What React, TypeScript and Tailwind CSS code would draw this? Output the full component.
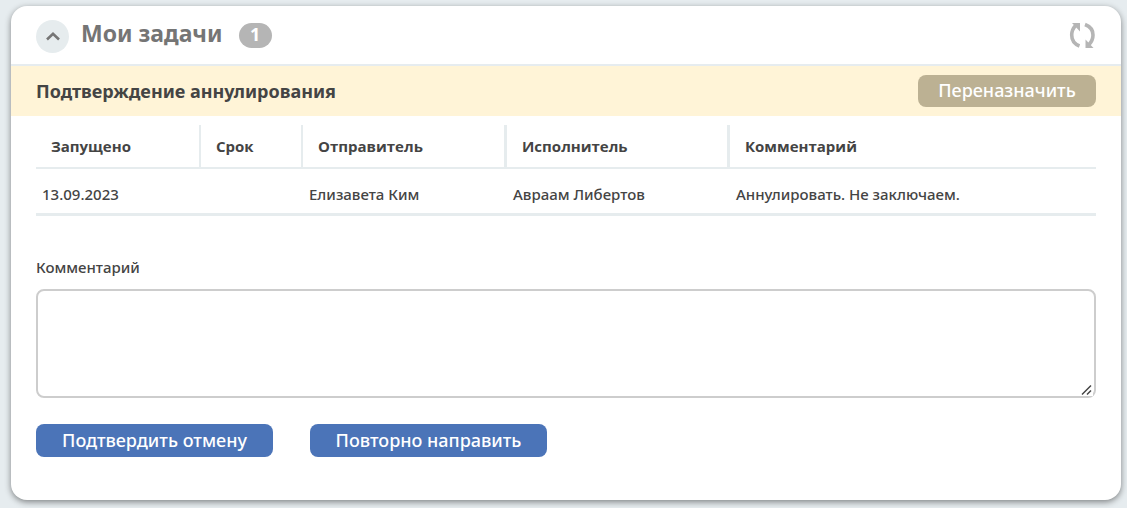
import { useState } from 'react'

interface Task {
  started: string
  due: string
  sender: string
  assignee: string
  comment: string
}

const TASKS: Task[] = [
  {
    started: '13.09.2023',
    due: '',
    sender: 'Елизавета Ким',
    assignee: 'Авраам Либертов',
    comment: 'Аннулировать. Не заключаем.',
  },
]

const TH_CLS = "h-11 border-b-2 border-[#e6ecee] px-[15px] text-left font-['Open_Sans','Noto_Sans',sans-serif] font-bold"
const TD_CLS = 'h-[47px] border-b-3 border-[#e6ecee] px-1.5 pt-1.5'
const ACTION_CLS = 'h-[33px] w-[237px] rounded-lg bg-[#4b74b8] pb-0.5 text-lg leading-6 font-medium text-white hover:bg-[#3f66a6]'

const ChevronIcon = () => (
  <svg width="16" height="16" viewBox="0 0 16 16" fill="none" stroke="#757575" strokeWidth="2.6" aria-hidden="true">
    <path d="M2 11.5 8 5.7l6 5.8" />
  </svg>
)

const RefreshIcon = () => (
  <svg width="28" height="28" viewBox="0 0 28 28" fill="none" aria-hidden="true">
    <path d="M11.5 25C6.3 23 3.700 18.800 3.700 14c0-4 1.400-6.800 3.900-9.500" stroke="#b5b5b5" strokeWidth="3.600" />
    <path d="M4 2h8v8.500z" fill="#b5b5b5" />
    <path d="M17 3.500c5.200 2 8 6 8 10.500 0 4-1.400 6.800-3.900 9.500" stroke="#b5b5b5" strokeWidth="3.600" />
    <path d="M25.500 27h-8v-8.500z" fill="#b5b5b5" />
  </svg>
)

const GripIcon = () => (
  <svg
    width="12"
    height="12"
    viewBox="0 0 12 12"
    stroke="#444"
    strokeWidth="1.5"
    className="pointer-events-none absolute right-[3px] bottom-0.5 bg-white"
    aria-hidden="true"
  >
    <path d="M1 10.500 10 1.500M6 10.500l4-4" />
  </svg>
)

export default function App() {
  const [open, setOpen] = useState(true)
  const [comment, setComment] = useState('')

  return (
    <div className="min-h-screen bg-[#e6ecef] pt-1.5 pr-1.5 pb-2 pl-[11px] font-['Noto_Sans','Open_Sans',sans-serif] text-[15px] leading-5 font-medium text-[#444]">
      <section className="overflow-hidden rounded-2xl bg-white shadow-[0_2px_6px_rgba(0,0,0,0.45)]">
        <header className="flex h-[60px] items-center border-b-2 border-[#e6ecef] px-[25px]">
          <button
            type="button"
            aria-label="Свернуть"
            aria-expanded={open}
            onClick={() => setOpen(!open)}
            className="mt-0.5 flex size-[33px] items-center justify-center rounded-full bg-[#e6ecee]"
          >
            <ChevronIcon />
          </button>
          <h1 className="ml-3 pb-1 text-[23px] leading-8 font-bold text-[#757575]">Мои задачи</h1>
          <span className="ml-4 flex h-[25px] w-[33px] items-center justify-center rounded-full bg-[#b5b5b5] pb-0.5 text-lg font-bold text-white">
            {TASKS.length}
          </span>
          <button type="button" aria-label="Обновить" className="ml-auto">
            <RefreshIcon />
          </button>
        </header>

        {open && (
          <>
            <div className="flex h-[50px] items-center justify-between bg-[#fff4d7] px-[25px]">
              <h2 className="text-lg leading-6 font-bold">Подтверждение аннулирования</h2>
              <button
                type="button"
                className="h-8 w-[178px] rounded-lg bg-[#bcb193] pb-0.5 text-lg leading-6 font-medium text-white"
              >
                Переназначить
              </button>
            </div>

            <div className="px-[25px] pt-[9px] pb-[43px]">
              <table className="w-full table-fixed border-separate border-spacing-0">
                <thead>
                  <tr>
                    <th className={`${TH_CLS} w-[165px] border-r-2`}>Запущено</th>
                    <th className={`${TH_CLS} w-[102px] border-r-2`}>Срок</th>
                    <th className={`${TH_CLS} w-[204px] border-r-3`}>Отправитель</th>
                    <th className={`${TH_CLS} w-[223px] border-r-3`}>Исполнитель</th>
                    <th className={TH_CLS}>Комментарий</th>
                  </tr>
                </thead>
                <tbody>
                  {TASKS.map(t => (
                    <tr key={t.started + t.sender}>
                      <td className={TD_CLS}>{t.started}</td>
                      <td className={TD_CLS}>{t.due}</td>
                      <td className={TD_CLS}>{t.sender}</td>
                      <td className={TD_CLS}>{t.assignee}</td>
                      <td className={TD_CLS}>{t.comment}</td>
                    </tr>
                  ))}
                </tbody>
              </table>

              <form onSubmit={e => e.preventDefault()}>
                <label htmlFor="comment" className="mt-[41px] block">Комментарий</label>
                <div className="relative mt-3">
                  <textarea
                    id="comment"
                    value={comment}
                    onChange={e => setComment(e.target.value)}
                    className="block h-[109px] w-full resize-y rounded-lg border-2 border-[#cdcdcd] px-3 py-2"
                  />
                  <GripIcon />
                </div>
                <div className="mt-[26px] flex flex-wrap gap-[37px]">
                  <button type="submit" className={ACTION_CLS}>Подтвердить отмену</button>
                  <button type="button" className={ACTION_CLS}>Повторно направить</button>
                </div>
              </form>
            </div>
          </>
        )}
      </section>
    </div>
  )
}
